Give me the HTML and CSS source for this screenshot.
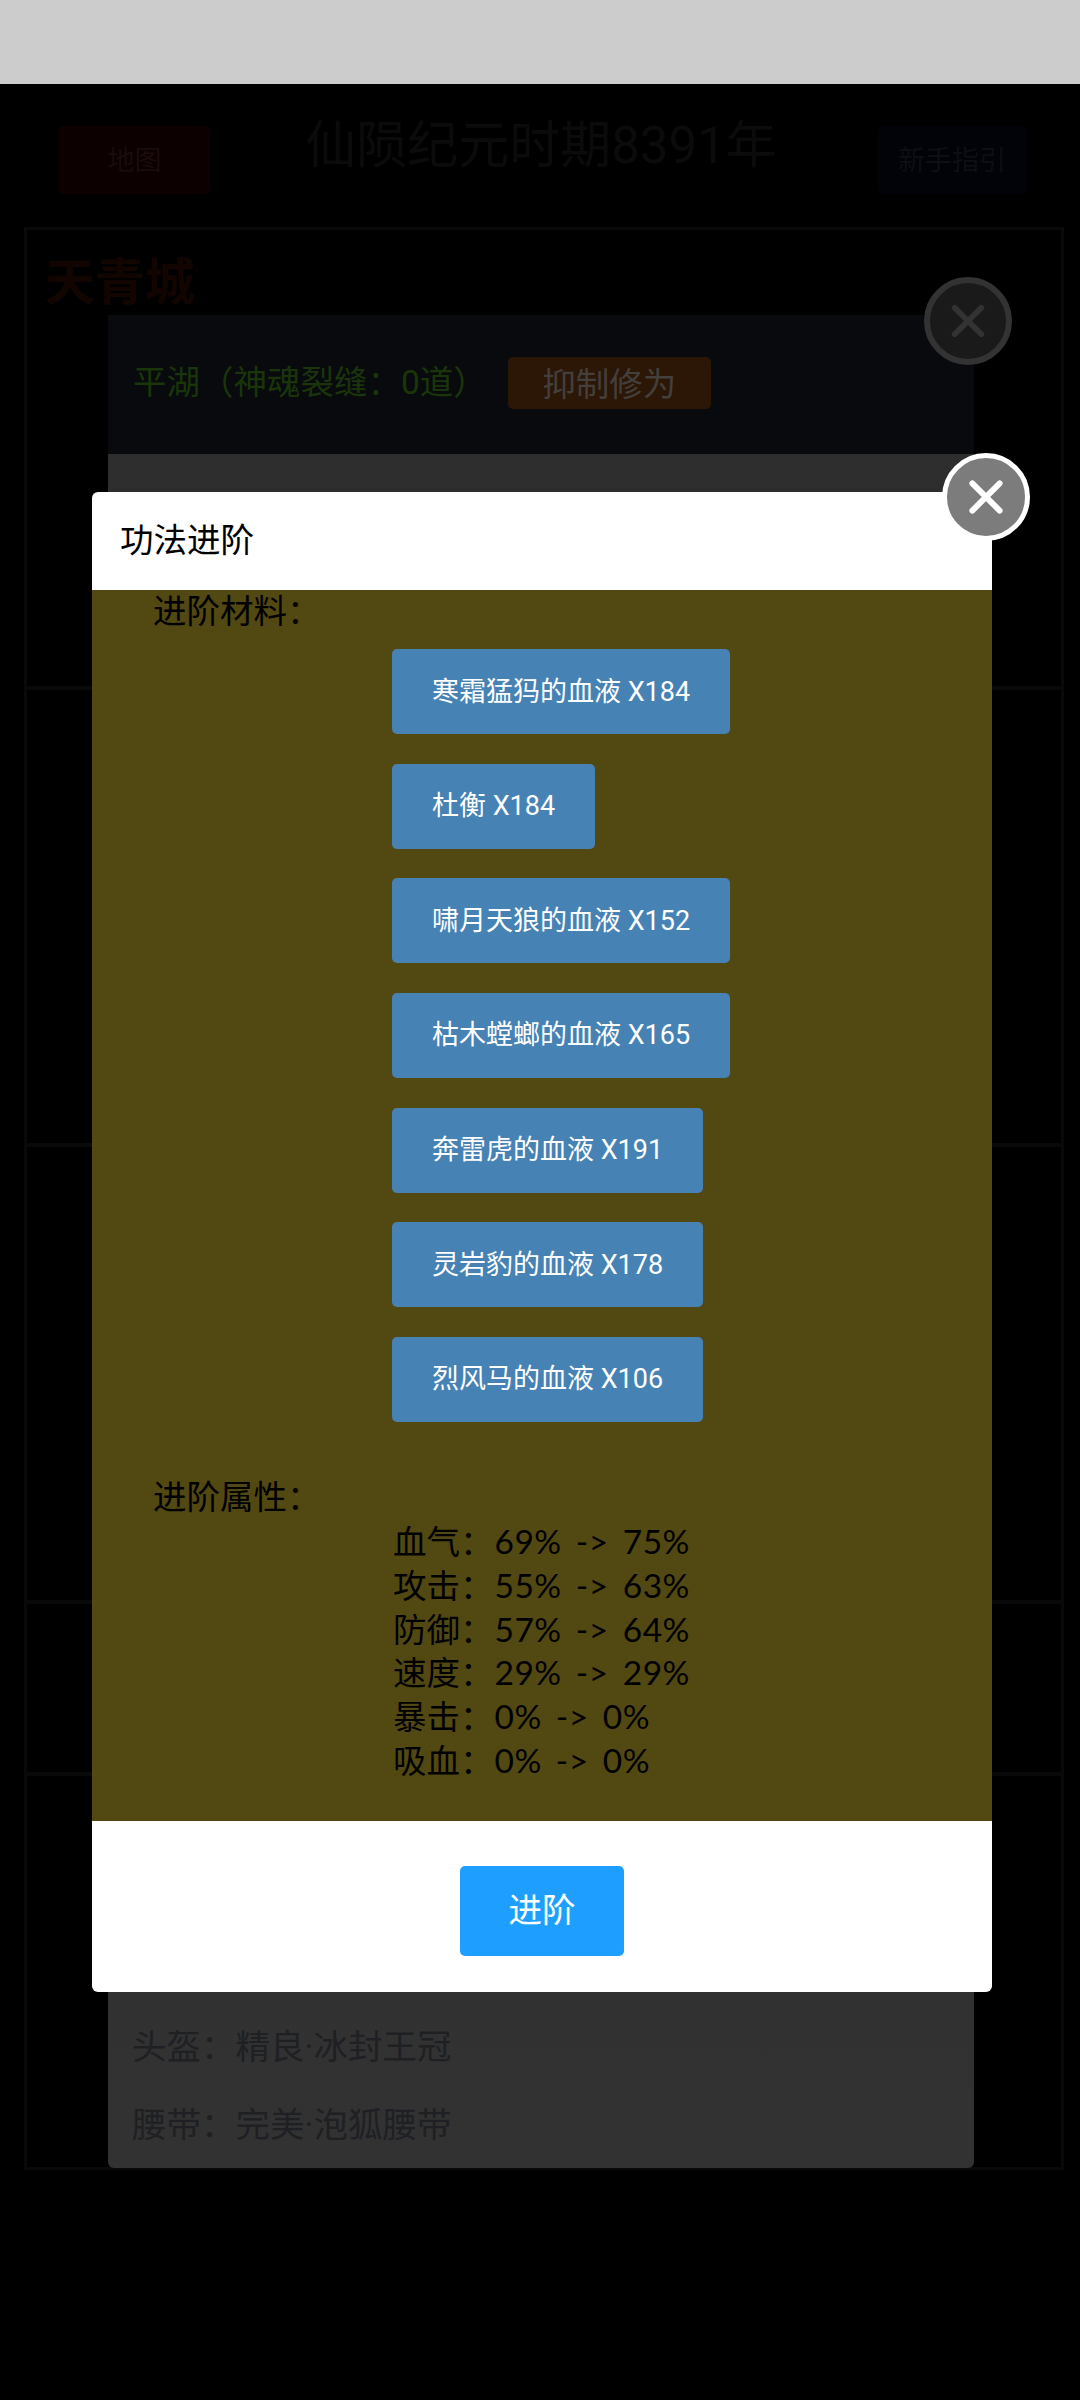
FILE: index.html
```html
<!DOCTYPE html>
<html lang="zh-CN">
<head>
  <meta charset="UTF-8">
  <meta name="viewport" content="width=device-width, initial-scale=1.0">
  <title>仙陨纪元</title>
  <link rel="stylesheet" href="styles.css">
</head>
<body>
  <div class="status-bar"></div>

  <div class="top">
    <button class="top-btn map-btn">地图</button>
    <div class="era">仙陨纪元时期8391年</div>
    <button class="top-btn guide-btn">新手指引</button>
  </div>

  <div class="world">
    <div class="card card-city"><div class="city-name">天青城</div></div>
    <div class="card card-mid"></div>
    <div class="card card-mid"></div>
    <div class="card card-small"></div>
    <div class="card card-last"></div>
  </div>

  <!-- first popup, behind the mask -->
  <div class="info-popup">
    <div class="info-head">
      <span class="place">平湖（神魂裂缝：0道）</span>
      <button class="suppress-btn">抑制修为</button>
    </div>
    <div class="info-body">
      <div class="gear">头盔：精良·冰封王冠</div>
      <div class="gear">腰带：完美·泡狐腰带</div>
    </div>
    <div class="close close-dim">
      <svg viewBox="0 0 40 40"><path d="M13 13 L27 27 M27 13 L13 27"/></svg>
    </div>
  </div>

  <!-- skill upgrade dialog -->
  <div class="dialog">
    <div class="dialog-title">功法进阶</div>
    <div class="dialog-body">
      <div class="label">进阶材料：</div>
      <div class="materials">
        <button class="material">寒霜猛犸的血液 X184</button>
        <button class="material">杜衡 X184</button>
        <button class="material">啸月天狼的血液 X152</button>
        <button class="material">枯木螳螂的血液 X165</button>
        <button class="material">奔雷虎的血液 X191</button>
        <button class="material">灵岩豹的血液 X178</button>
        <button class="material">烈风马的血液 X106</button>
      </div>
      <div class="label">进阶属性：</div>
      <div class="attrs">
        <div class="attr">血气：<span class="val">69% -&gt; 75%</span></div>
        <div class="attr">攻击：<span class="val">55% -&gt; 63%</span></div>
        <div class="attr">防御：<span class="val">57% -&gt; 64%</span></div>
        <div class="attr">速度：<span class="val">29% -&gt; 29%</span></div>
        <div class="attr">暴击：<span class="val">0% -&gt; 0%</span></div>
        <div class="attr">吸血：<span class="val">0% -&gt; 0%</span></div>
      </div>
    </div>
    <div class="dialog-foot">
      <button class="upgrade-btn">进阶</button>
    </div>
    <div class="close close-top">
      <svg viewBox="0 0 40 40"><path d="M13 13 L27 27 M27 13 L13 27"/></svg>
    </div>
  </div>
</body>
</html>
```

FILE: styles.css
```css
* {
  box-sizing: border-box;
}
body {
  margin: 0;
  height: 2400px;
  overflow: hidden;
  position: relative;
  background-color: #000;
  font-family: Roboto, "Noto Sans CJK SC", sans-serif;
  font-size: 33.5px;
}
button {
  border: none;
  padding: 0;
  font-family: inherit;
}
.status-bar {
  height: 84px;
  background-color: #ccc;
}

/* header row */
.top {
  height: 143px;
  padding: 42px 54px 0 59px;
  display: flex;
  justify-content: space-between;
  align-items: flex-start;
}
.top-btn {
  height: 68px;
  padding-bottom: 3px;
  border-radius: 4px;
  font-size: 27px;
}
.map-btn {
  width: 151px;
  background-color: #0c0000;
  color: #1a0c0c;
}
.guide-btn {
  width: 148px;
  background-color: #020209;
  color: #0e0e13;
}
.era {
  margin: -15px 6px 0 0;
  font-size: 51px;
  line-height: 70px;
  color: #0b0b0b;
}

/* city cards */
.world {
  margin: 0 16px 0 24px;
  height: 1943px;
  border: 3px solid #090909;
}
.card {
  border-bottom: 4px solid #090909;
}
.card-city {
  height: 460px;
  padding: 18px 18px;
}
.card-mid {
  height: 457px;
}
.card-small {
  height: 172px;
}
.card-last {
  border-bottom: none;
}
.city-name {
  font-size: 50px;
  font-weight: 700;
  line-height: 70px;
  color: #120500;
}

/* popup under the mask */
.info-popup {
  position: absolute;
  left: 108px;
  top: 315px;
  width: 866px;
  height: 1853px;
  display: flex;
  flex-direction: column;
  border-radius: 0 0 6px 6px;
  background: linear-gradient(#2d2d2d, #323232);
}
.info-head {
  height: 139px;
  padding: 0 25px;
  display: flex;
  align-items: center;
  gap: 21px;
  background-color: #080a0e;
}
.place {
  margin-bottom: 10px;
  color: #1b350a;
}
.suppress-btn {
  width: 203px;
  height: 52px;
  margin-bottom: 3px;
  padding-bottom: 5px;
  border-radius: 5px;
  background-color: #2c1606;
  color: #433f3c;
  font-size: 33.5px;
}
.info-body {
  margin-top: auto;
  padding: 0 24px 4px;
  font-size: 34.5px;
  color: #1e2024;
}
.gear {
  height: 78px;
  line-height: 78px;
}

/* upgrade dialog */
.dialog {
  position: absolute;
  left: 92px;
  top: 492px;
  width: 900px;
  height: 1500px;
  display: flex;
  flex-direction: column;
  border-radius: 6px;
  background-color: #fff;
}
.dialog-title {
  height: 98px;
  padding-left: 28px;
  line-height: 98px;
  color: #000;
}
.dialog-body {
  height: 1231px;
  padding-left: 61px;
  background-color: #524812;
  color: #000;
}
.label {
  height: 44px;
  line-height: 44px;
}
.materials {
  padding: 15px 0 0 239px;
  height: 842px;
  display: flex;
  flex-direction: column;
  align-items: flex-start;
  gap: 29.67px;
}
.material {
  height: 85px;
  padding: 0 40px 5px;
  border-radius: 5px;
  background-color: #4682b4;
  color: #fff;
  font-size: 27px;
}
.attrs {
  padding-left: 240px;
}
.attr {
  height: 43.8px;
  line-height: 42px;
}
.val {
  margin-left: 1px;
  font-family: Lato, "Noto Sans CJK SC", sans-serif;
  letter-spacing: 0.5px;
  word-spacing: 5px;
}
.dialog-foot {
  flex: 1;
  padding-top: 45px;
  display: flex;
  justify-content: center;
  align-items: flex-start;
}
.upgrade-btn {
  width: 164px;
  height: 90px;
  padding-bottom: 8px;
  border-radius: 5px;
  background-color: #1e9fff;
  color: #fff;
  font-size: 33.5px;
}

/* round close buttons */
.close {
  position: absolute;
  width: 88px;
  height: 88px;
  border-radius: 50%;
}
.close svg {
  display: block;
  width: 100%;
  height: 100%;
  fill: none;
  stroke-width: 3;
  stroke-linecap: round;
}
.close-top {
  right: -38px;
  top: -39px;
  border: 5px solid #fff;
  background-color: #7c7c7c;
}
.close-top svg {
  stroke: #fff;
}
.close-dim {
  right: -38px;
  top: -38px;
  border: 6px solid #333;
  background-color: #1a1a1a;
}
.close-dim svg {
  stroke: #333;
}
```
